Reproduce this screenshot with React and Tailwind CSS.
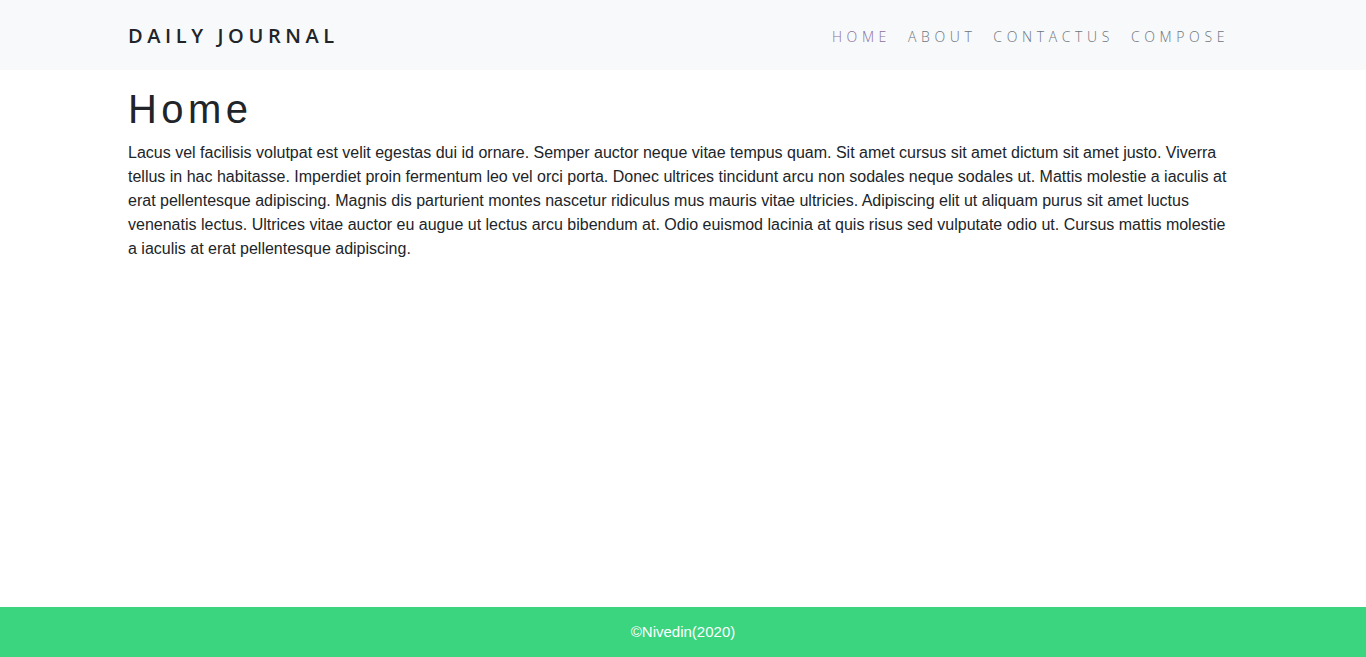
import React from 'react';

const links = ['Home', 'About', 'ContactUs', 'Compose'];

const text =
  'Lacus vel facilisis volutpat est velit egestas dui id ornare. Semper auctor neque vitae tempus quam. Sit amet cursus sit amet dictum sit amet justo. Viverra tellus in hac habitasse. Imperdiet proin fermentum leo vel orci porta. Donec ultrices tincidunt arcu non sodales neque sodales ut. Mattis molestie a iaculis at erat pellentesque adipiscing. Magnis dis parturient montes nascetur ridiculus mus mauris vitae ultricies. Adipiscing elit ut aliquam purus sit amet luctus venenatis lectus. Ultrices vitae auctor eu augue ut lectus arcu bibendum at. Odio euismod lacinia at quis risus sed vulputate odio ut. Cursus mattis molestie a iaculis at erat pellentesque adipiscing.';

const App = () => {
  return (
    <div className="min-h-screen flex flex-col bg-white font-['Liberation_Sans',Arial,sans-serif] text-[#212529]">
      <nav className="bg-[#f8f9fa] h-[70px]">
        <div className="max-w-[1140px] mx-auto px-[15px] h-full flex items-center justify-between">
          <a className="font-['Open_Sans',sans-serif] font-semibold text-[20px] tracking-[0.23em] text-[#212529] uppercase mt-[2px]">
            Daily Journal
          </a>
          <ul className="flex items-center gap-[17px] mr-[9px] mt-[2px] font-['Open_Sans',sans-serif] font-light text-[14px] tracking-[0.33em] uppercase">
            {links.map((l, i) => (
              <li key={l}>
                <a className={i === 0 ? 'text-[#8b6f9e]' : 'text-[#6c757d]'}>{l}</a>
              </li>
            ))}
          </ul>
        </div>
      </nav>

      <main className="flex-1">
        <div className="max-w-[1140px] mx-auto px-[15px]">
          <h1 className="text-[40px] leading-[48px] tracking-[0.11em] font-normal mt-[15px] mb-[8px]">Home</h1>
          <p className="text-[16px] leading-[24px]">{text}</p>
        </div>
      </main>

      <footer className="bg-[#3bd47f] h-[50px] flex items-center justify-center text-white text-[15px]">
        ©Nivedin(2020)
      </footer>
    </div>
  );
};

export default App;
